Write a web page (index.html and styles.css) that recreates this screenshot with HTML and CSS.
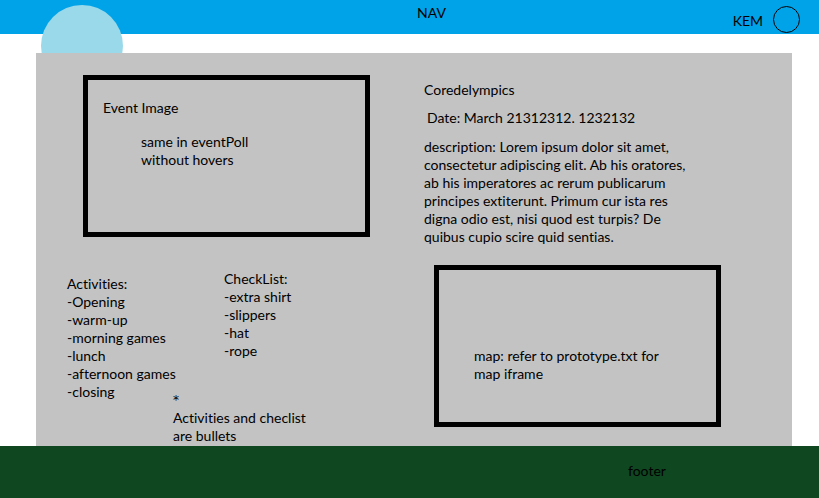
FILE: index.html
```html
<!DOCTYPE html>
<html lang="en">
<head>
<meta charset="utf-8">
<title>Event</title>
<link rel="stylesheet" href="styles.css">
</head>
<body>
<header class="nav">
  <div class="logo"></div>
  <div class="nav-title">NAV</div>
  <div class="nav-user">
    <span class="nav-name">KEM</span>
    <span class="avatar"></span>
  </div>
</header>
<main class="main">
  <section class="panel">
    <div class="col-left">
      <div class="event-box">
        <div class="event-label">Event Image</div>
        <div class="event-note">same in eventPoll<br>without hovers</div>
      </div>
      <div class="lists">
        <div class="activities">Activities:<br>-Opening<br>-warm-up<br>-morning games<br>-lunch<br>-afternoon games<br>-closing</div>
        <div class="checklist">CheckList:<br>-extra shirt<br>-slippers<br>-hat<br>-rope</div>
        <div class="footnote"><span class="star">*</span><br>Activities and checlist<br>are bullets</div>
      </div>
    </div>
    <div class="col-right">
      <div class="event-title">Coredelympics</div>
      <div class="event-date">Date: March 21312312. 1232132</div>
      <div class="event-desc">description: Lorem ipsum dolor sit amet,<br>consectetur adipiscing elit. Ab his oratores,<br>ab his imperatores ac rerum publicarum<br>principes extiterunt. Primum cur ista res<br>digna odio est, nisi quod est turpis? De<br>quibus cupio scire quid sentias.</div>
      <div class="map-box">map: refer to prototype.txt for<br>map iframe</div>
    </div>
  </section>
</main>
<footer class="footer">footer</footer>
</body>
</html>
```
FILE: styles.css
```css
* { box-sizing: border-box; }
html, body { margin: 0; padding: 0; }
body {
  background: #ffffff;
  color: #000000;
  font-family: "Lato", "Open Sans", sans-serif;
  font-size: 14px;
  line-height: 18px;
  font-variant-ligatures: none;
  width: 819px;
  height: 498px;
  overflow: hidden;
}
.nav {
  height: 34px;
  background: #00a2e8;
  display: flex;
  align-items: flex-start;
  padding-right: 19px;
}
.logo {
  position: absolute;
  left: 41px;
  top: 5px;
  width: 82px;
  height: 82px;
  border-radius: 50%;
  background: #99d9ea;
}
.nav-title {
  margin-left: 417px;
  padding-top: 4px;
}
.nav-user {
  margin-left: auto;
  display: flex;
  align-items: center;
  gap: 10px;
  padding-top: 6px;
}
.nav-name { padding-top: 2px; }
.avatar {
  width: 27px;
  height: 27px;
  border: 1px solid #000;
  border-radius: 50%;
}
.main { padding-top: 19px; }
.panel {
  position: relative;
  margin-left: 36px;
  width: 756px;
  height: 393px;
  background: #c3c3c3;
  padding-top: 22px;
  display: flex;
}
.col-left {
  width: 388px;
  padding-left: 31px;
}
.event-box {
  margin-left: 16px;
  width: 287px;
  height: 162px;
  border: 5px solid #000;
  padding: 19px 15px;
}
.event-note {
  margin-top: 16px;
  margin-left: 38px;
}
.lists {
  margin-top: 33px;
  display: grid;
  grid-template-columns: 106px 51px auto;
  align-items: start;
}
.lists > div { white-space: nowrap; min-width: 0; }
.activities { grid-column: 1; grid-row: 1 / span 2; margin-top: 5px; }
.checklist { grid-column: 3; grid-row: 1; }
.footnote { grid-column: 2 / span 2; grid-row: 2; margin-top: 30px; }
.star { font-family: "DejaVu Sans", sans-serif; font-size: 12px; }
.col-right { padding-top: 6px; }
.event-date { margin-top: 10px; padding-left: 3px; }
.event-desc { margin-top: 11px; }
.map-box {
  margin-top: 19px;
  margin-left: 10px;
  width: 287px;
  height: 162px;
  border: 5px solid #000;
  padding: 77px 0 0 35px;
}
.footer {
  height: 52px;
  background: #0f4720;
  padding: 16px 0 0 628px;
}
```
